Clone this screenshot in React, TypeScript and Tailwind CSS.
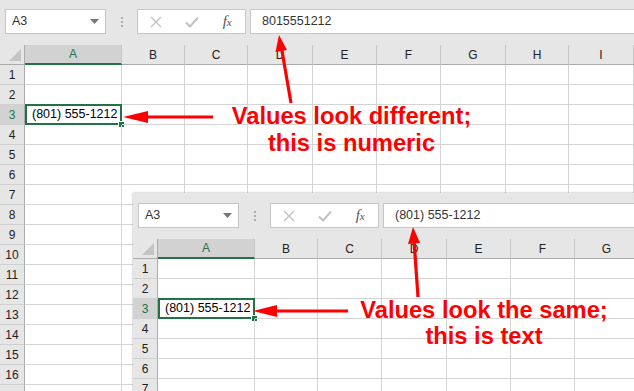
import React from "react";

interface Col {
  label: string;
  w: string;
}

const topCols: Col[] = [
  { label: "A", w: "w-[97px]" },
  { label: "B", w: "w-[63px]" },
  { label: "C", w: "w-[63px]" },
  { label: "D", w: "w-[65px]" },
  { label: "E", w: "w-[64px]" },
  { label: "F", w: "w-[64px]" },
  { label: "G", w: "w-[65px]" },
  { label: "H", w: "w-[63px]" },
  { label: "I", w: "w-[65px]" },
];

const pastedCols: Col[] = [
  { label: "A", w: "w-[97px]" },
  { label: "B", w: "w-[63px]" },
  { label: "C", w: "w-[64px]" },
  { label: "D", w: "w-[65px]" },
  { label: "E", w: "w-[64px]" },
  { label: "F", w: "w-[64px]" },
  { label: "G", w: "w-[64px]" },
];

const PHONE = "(801) 555-1212";

// Name box + formula bar strip
function Toolbar({ formula }: { formula: string }) {
  return (
    <div className="h-[46px] shrink-0 bg-[#e6e6e6] flex items-start pt-[10px] pl-[5px]">
      <div className="w-[101px] h-[25px] shrink-0 bg-white border border-[#c6c6c6] flex items-center justify-between pl-[6px] pr-[6px] text-[12.5px] text-[#333]">
        <span>A3</span>
        <svg width="9" height="5" viewBox="0 0 9 5">
          <polygon points="0,0 9,0 4.5,5" fill="#777" />
        </svg>
      </div>
      <div className="w-[31px] h-[25px] shrink-0 flex flex-col items-center justify-center gap-[2px]">
        <span className="w-[2px] h-[2px] bg-[#b0b0b0]" />
        <span className="w-[2px] h-[2px] bg-[#b0b0b0]" />
        <span className="w-[2px] h-[2px] bg-[#b0b0b0]" />
      </div>
      <div className="w-[109px] h-[25px] shrink-0 bg-white border border-[#c6c6c6] flex items-center">
        <div className="w-[36px] flex justify-center">
          <svg width="12" height="12" viewBox="0 0 12 12">
            <path d="M1 1 L11 11 M11 1 L1 11" stroke="#c2c2c2" strokeWidth="1.3" fill="none" />
          </svg>
        </div>
        <div className="w-[36px] flex justify-center">
          <svg width="14" height="12" viewBox="0 0 14 12">
            <path d="M1 6.5 L5 10.5 L13 1.5" stroke="#c2c2c2" strokeWidth="2" fill="none" />
          </svg>
        </div>
        <div className="w-[36px] flex justify-center items-baseline text-[#555] font-['Liberation_Serif',serif] italic">
          <span className="text-[15px] leading-none">f</span>
          <span className="text-[11px] leading-none">x</span>
        </div>
      </div>
      <div className="ml-[4px] flex-1 h-[25px] bg-white border border-[#c6c6c6] border-r-0 flex items-center pl-[11px] text-[12.5px] text-[#333] whitespace-nowrap">
        {formula}
      </div>
    </div>
  );
}

function HeaderRow({ cols }: { cols: Col[] }) {
  return (
    <div className="flex h-[20px] shrink-0">
      <div className="w-[25px] shrink-0 bg-[#e6e6e6] border-r border-b border-[#ababab] flex items-end justify-end pr-[3px] pb-[3px]">
        <svg width="12" height="12" viewBox="0 0 12 12">
          <polygon points="12,0 12,12 0,12" fill="#c4c4c4" />
        </svg>
      </div>
      {cols.map((c, i) =>
        i === 0 ? (
          <div
            key={c.label}
            className={`${c.w} shrink-0 bg-[#d2d2d2] border-r border-r-[#c6c6c6] border-b-2 border-b-[#217346] flex items-center justify-center text-[12px] text-[#217346]`}
          >
            {c.label}
          </div>
        ) : (
          <div
            key={c.label}
            className={`${c.w} shrink-0 bg-[#e6e6e6] border-r border-r-[#c6c6c6] border-b border-b-[#ababab] flex items-center justify-center text-[12px] text-[#222]`}
          >
            {c.label}
          </div>
        )
      )}
    </div>
  );
}

function Row({ n, cols, value, hideLabel }: { n: number; cols: Col[]; value: string; hideLabel?: boolean }) {
  const selected = n === 3;
  return (
    <div className="flex h-[20px] shrink-0">
      <div
        className={`w-[25px] shrink-0 border-r border-r-[#ababab] border-b border-b-[#d0d0d0] flex items-center justify-center text-[12px] ${
          selected ? "bg-[#d2d2d2] text-[#217346]" : "bg-[#e6e6e6] text-[#222]"
        }`}
      >
        {hideLabel ? "" : n}
      </div>
      {cols.map((c, i) => (
        <div key={c.label} className={`${c.w} shrink-0 border-r border-b border-[#d4d4d4] relative`}>
          {selected && i === 0 && (
            <>
              <div className="absolute -top-px left-0 -right-px -bottom-px border-2 border-[#217346] flex items-center pl-[5px] text-[12.5px] text-black whitespace-nowrap">
                {value}
              </div>
              <div className="absolute -right-[4px] -bottom-[4px] w-[7px] h-[7px] bg-[#217346] border border-white" />
            </>
          )}
        </div>
      ))}
    </div>
  );
}

function Sheet({ formula, cols, rows }: { formula: string; cols: Col[]; rows: number }) {
  return (
    <div className="flex flex-col bg-white">
      <Toolbar formula={formula} />
      <HeaderRow cols={cols} />
      {Array.from({ length: rows }, (_, i) => (
        <Row key={i} n={i + 1} cols={cols} value={PHONE} hideLabel={i + 1 === 17} />
      ))}
    </div>
  );
}

export default function App() {
  return (
    <div className="relative w-[634px] h-[391px] overflow-hidden bg-white font-['Liberation_Sans',Arial,sans-serif]">
      <div className="-mt-px">
        <Sheet formula="8015551212" cols={topCols} rows={17} />
      </div>

      {/* pasted second screenshot */}
      <div className="absolute left-[133px] top-[193px] w-[501px] h-[198px] overflow-hidden shadow-[0_0_2px_rgba(0,0,0,0.35)]">
        <Sheet formula={PHONE} cols={pastedCols} rows={7} />
      </div>

      {/* red callout arrows */}
      <svg className="absolute inset-0 pointer-events-none" width="634" height="391" viewBox="0 0 634 391">
        <g stroke="#ff0000" strokeWidth="3.2" fill="none">
          <line x1="291" y1="103" x2="281.5" y2="48" />
          <line x1="213" y1="117" x2="140" y2="117" />
          <line x1="418" y1="297" x2="414" y2="240" />
          <line x1="348" y1="311" x2="270" y2="311" />
        </g>
        <g fill="#ff0000">
          <polygon points="279,35 287,50 275.5,52" />
          <polygon points="123,117 148,111 148,123" />
          <polygon points="413,227 420,243 408,244" />
          <polygon points="253,311 277,305 277,317" />
        </g>
      </svg>

      <div className="absolute left-[211px] top-[103px] w-[281px] text-center text-[23.7px] leading-[27px] font-bold text-[#ff0000] whitespace-nowrap">
        <div>Values look different;</div>
        <div>this is numeric</div>
      </div>
      <div className="absolute left-[344px] top-[297px] w-[280px] text-center text-[23.7px] leading-[26px] font-bold text-[#ff0000] whitespace-nowrap">
        <div>Values look the same;</div>
        <div>this is text</div>
      </div>
    </div>
  );
}
